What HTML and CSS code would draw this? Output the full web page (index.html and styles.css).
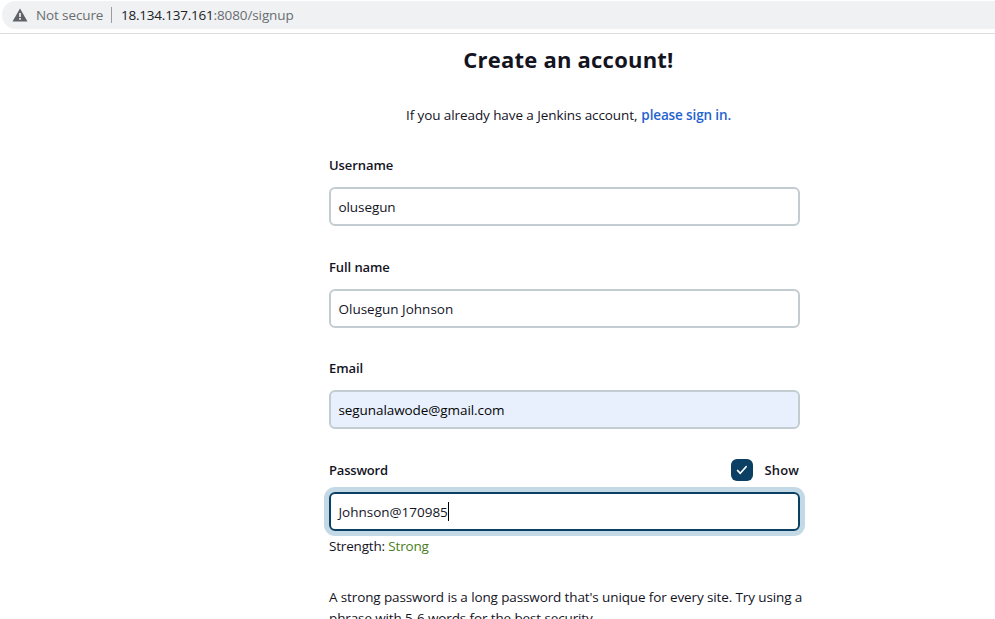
FILE: index.html
```html
<!DOCTYPE html>
<html lang="en">
<head>
<meta charset="utf-8">
<title>Create an account! [Jenkins]</title>
<link rel="stylesheet" href="styles.css">
</head>
<body>
<header class="toolbar">
  <div class="address">
    <svg class="warning" width="16" height="14" viewBox="0 0 16 14"><path fill="#5f6368" d="M8 .5 15.5 13.5H.5Z"/><path fill="#eff1f3" d="M7.2 5h1.7v4H7.2zM7.2 10h1.7v1.7H7.2z"/></svg>
    <span class="security">Not secure</span>
    <span class="separator"></span>
    <span class="url"><span class="host">18.134.137.161</span>:8080/signup</span>
  </div>
</header>
<main class="signup">
  <h1>Create an account!</h1>
  <p class="intro"><span>If you already have a Jenkins account,</span> <a href="#">please sign in.</a></p>
  <form>
    <div class="field"><div class="label-row"><label>Username</label></div><div class="input"><span class="username">olusegun</span></div></div>
    <div class="field"><div class="label-row"><label>Full name</label></div><div class="input"><span class="fullname">Olusegun Johnson</span></div></div>
    <div class="field"><div class="label-row"><label>Email</label></div><div class="input autofilled"><span class="email">segunalawode@gmail.com</span></div></div>
    <div class="field password"><div class="label-row"><label class="password-label">Password</label>
      <div class="show"><span class="checkbox"><svg width="22" height="22" viewBox="0 0 22 22"><path d="m6.6 11.5 2.7 2.8 5.8-6.6" fill="none" stroke="#fff" stroke-width="1.7" stroke-linecap="round" stroke-linejoin="round"/></svg></span><span>Show</span></div></div>
      <div class="input focused"><span class="secret">Johnson@170985</span><i class="caret"></i></div></div>
    <p class="strength">Strength: <span>Strong</span></p>
    <p class="hint">A strong password is a long password that's unique for every site. Try using a<br>phrase with 5-6 words for the best security.</p>
  </form>
</main>
</body>
</html>
```
FILE: styles.css
```css
* { box-sizing: border-box; }
html, body { height: 100%; }
body { margin: 0; overflow: hidden; background: #fff; color: #14141f; font: 13.5px/21px "Open Sans", "Noto Sans", sans-serif; }
.toolbar { height: 34px; padding: 1px 0 0 2px; border-bottom: 1px solid #dadce0; }
.address { height: 28px; display: flex; align-items: center; background: #eff1f3; border-radius: 14px 0 0 14px; padding-left: 10px; color: #696d71; white-space: nowrap; }
.warning { flex: none; }
.security { width: 67px; margin-left: 8px; letter-spacing: -.12px; }
.separator { width: 1px; height: 16px; margin: 0 9px 0 8px; background: #9a9da1; }
.url { letter-spacing: -.1px; }
.host { color: #202124; letter-spacing: -.22px; }
.signup { width: 479px; margin-left: 329px; white-space: nowrap; }
h1 { height: 52px; margin: 0; text-align: center; font-size: 22px; line-height: 50px; font-weight: 700; letter-spacing: .22px; }
.intro { margin: 19px 0 0; height: 21px; padding-left: 77px; display: flex; gap: 4px; letter-spacing: -.09px; }
a { color: #1f63d0; font-weight: 600; text-decoration: none; letter-spacing: -.13px; }
form { padding-top: 29px; }
.field { width: 471px; height: 102px; }
.field:nth-child(2) { height: 101px; }
.label-row { height: 21px; display: flex; justify-content: space-between; align-items: center; font-size: 13px; font-weight: 600; letter-spacing: -.08px; }
.password-label { letter-spacing: -.2px; }
.input { margin-top: 11px; height: 39px; display: flex; align-items: center; padding: 1px 0 0 7.5px; border: 2px solid #c3ccd1; border-radius: 6px; }
.username, .email { letter-spacing: -.08px; }
.autofilled { background: #e8f0fe; color: #050505; }
.focused { border-color: #0b4064; box-shadow: 0 0 0 5px #c4d9e6; }
.secret { width: 109.5px; letter-spacing: -.02px; }
.caret { width: 1px; height: 19px; margin-top: -1px; background: #000; }
.show { display: flex; align-items: center; gap: 11px; padding-right: 1px; letter-spacing: .15px; }
.checkbox { width: 22px; height: 22px; margin-top: -1px; border-radius: 6px; background: #0b4064; }
.checkbox svg { display: block; }
.password { height: 71px; }
.strength { margin: 5px 0 0; letter-spacing: -.18px; }
.strength span { color: #4a7d20; }
.hint { margin: 30px 0 0; letter-spacing: -.12px; }
```
